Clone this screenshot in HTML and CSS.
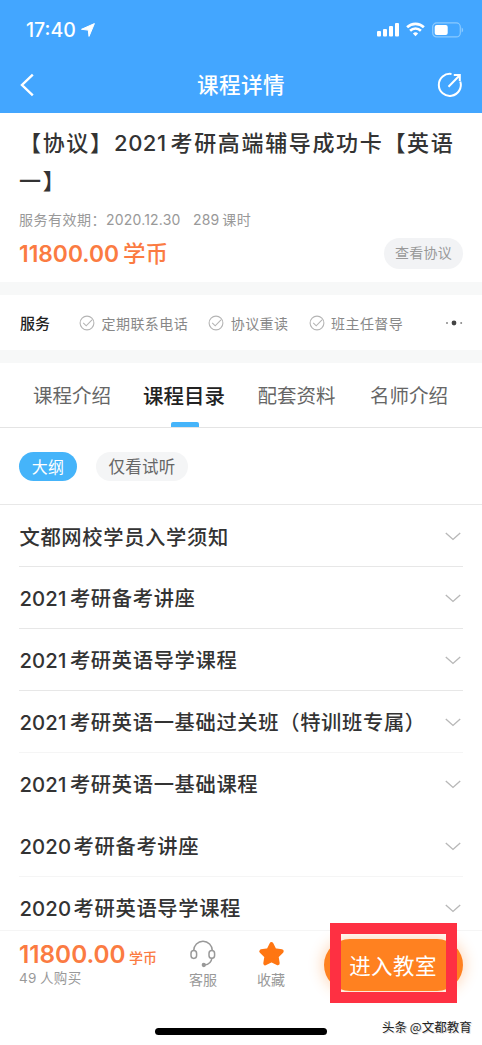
FILE: index.html
```html
<!DOCTYPE html>
<html lang="zh-CN">
<head>
<meta charset="utf-8">
<title>课程详情</title>
<link rel="stylesheet" href="styles.css">
</head>
<body>
<div class="screen">
  <header class="header">
    <div class="status">
      <div class="clock"><span>17:40</span>
        <svg width="14" height="14" viewBox="0 0 14 14"><path d="M13.4.6 8 13.4 7.3 7.1.5 6.3z" fill="#fff" stroke="#fff" stroke-width="1" stroke-linejoin="round"/></svg>
      </div>
      <div class="signals">
        <svg width="23" height="15" viewBox="0 0 23 15" fill="#fff"><rect x="0" y="9" width="4" height="5.5" rx="1"/><rect x="6" y="7" width="4" height="7.5" rx="1"/><rect x="12" y="4" width="4" height="10.5" rx="1"/><rect x="18" y="1" width="4" height="13.5" rx="1"/></svg>
        <svg class="wifi" width="19" height="15" viewBox="0 0 19 15" fill="none" stroke="#fff" stroke-width="2.6"><path d="M1.1 5.3a12 12 0 0 1 16.8 0M4.1 8.7a7.7 7.7 0 0 1 10.8 0"/><path d="m9.5 14.2-2.6-2.6a3.7 3.7 0 0 1 5.2 0z" fill="#fff" stroke="none"/></svg>
        <svg class="battery" width="32" height="16" viewBox="0 0 32 16"><rect x=".7" y=".9" width="27.6" height="14" rx="4" fill="none" stroke="#8bcaff" stroke-width="1.2"/><rect x="2.7" y="2.9" width="13" height="10" rx="2" fill="#fff"/><path d="M29.6 5.5v5q1.6-.8 1.6-2.5t-1.6-2.5" fill="#8bcaff"/></svg>
      </div>
    </div>
    <nav class="navbar">
      <svg class="back" width="14" height="24" viewBox="0 0 14 24" fill="none" stroke="#fff" stroke-width="2.4"><path d="M12.8 1.6 2 12l10.8 10.4"/></svg>
      <h1 class="nav-title">课程详情</h1>
      <svg class="share" width="26" height="26" viewBox="0 0 26 26" fill="none" stroke="#fff" stroke-width="2"><path d="M14.5 2A11 11 0 1 0 23.3 9.5M11.5 14.7 22.5 3.5M16.8 3h6v6"/></svg>
    </nav>
  </header>

  <section class="info">
    <h2 class="course"><span class="line">【协议】<span class="num">2021</span>考研高端辅导成功卡【英语</span><span class="line">一】</span></h2>
    <p class="meta"><span>服务有效期：</span><span class="num date">2020.12.30</span><span class="num hours">289</span><span>课时</span></p>
    <div class="price-row">
      <div class="price"><span class="num">11800.00</span><span class="price-unit">学币</span></div>
      <span class="agreement">查看协议</span>
    </div>
  </section>

  <section class="services">
    <strong class="services-label">服务</strong>
    <span class="service s1"><svg class="check" viewBox="0 0 16 16"><circle cx="8" cy="8" r="6.9"/><path d="m4.2 7.8 3 3 5.8-6"/></svg>定期联系电话</span>
    <span class="service s2"><svg class="check" viewBox="0 0 16 16"><circle cx="8" cy="8" r="6.9"/><path d="m4.2 7.8 3 3 5.8-6"/></svg>协议重读</span>
    <span class="service s3"><svg class="check" viewBox="0 0 16 16"><circle cx="8" cy="8" r="6.9"/><path d="m4.2 7.8 3 3 5.8-6"/></svg>班主任督导</span>
    <svg class="more" width="18" height="6" viewBox="0 0 18 6"><circle cx="2" cy="3" r="1" fill="#888"/><circle cx="9" cy="3" r="2.4" fill="#444"/><circle cx="16.2" cy="3" r="1" fill="#888"/></svg>
  </section>

  <nav class="tabs">
    <span class="tab">课程介绍</span>
    <span class="tab active">课程目录</span>
    <span class="tab t3">配套资料</span>
    <span class="tab t4">名师介绍</span>
  </nav>

  <div class="filters">
    <span class="pill on">大纲</span>
    <span class="pill">仅看试听</span>
  </div>

  <main class="list">
    <div class="row"><span>文都网校学员入学须知</span><svg class="chev" viewBox="0 0 16 9"><path d="m.8 1 7.2 6.4L15.2 1"/></svg></div>
    <div class="row"><span><span class="num">2021</span>考研备考讲座</span><svg class="chev" viewBox="0 0 16 9"><path d="m.8 1 7.2 6.4L15.2 1"/></svg></div>
    <div class="row"><span><span class="num">2021</span>考研英语导学课程</span><svg class="chev" viewBox="0 0 16 9"><path d="m.8 1 7.2 6.4L15.2 1"/></svg></div>
    <div class="row light"><span><span class="num">2021</span>考研英语一基础过关班（特训班专属）</span><svg class="chev" viewBox="0 0 16 9"><path d="m.8 1 7.2 6.4L15.2 1"/></svg></div>
    <div class="row plain"><span><span class="num">2021</span>考研英语一基础课程</span><svg class="chev" viewBox="0 0 16 9"><path d="m.8 1 7.2 6.4L15.2 1"/></svg></div>
    <div class="row light"><span><span class="num wide">2020</span>考研备考讲座</span><svg class="chev" viewBox="0 0 16 9"><path d="m.8 1 7.2 6.4L15.2 1"/></svg></div>
    <div class="row plain"><span><span class="num wide">2020</span>考研英语导学课程</span><svg class="chev" viewBox="0 0 16 9"><path d="m.8 1 7.2 6.4L15.2 1"/></svg></div>
  </main>

  <footer class="footer">
    <div class="bar">
      <div class="buy">
        <div class="total"><span class="num">11800.00</span><span class="unit">学币</span></div>
        <div class="count"><span class="num">49</span>人购买</div>
      </div>
      <div class="action support">
        <svg width="26" height="28" viewBox="0 0 26 28" fill="none" stroke="#999" stroke-width="1.5"><path d="M3.7 11V10.5a9.3 9.3 0 0 1 18.6 0v.5M22 17.5c-.5 4.5-3.5 7.2-7.6 7.6"/><rect x="1" y="10.6" width="5.6" height="7.8" rx="2.8"/><rect x="19" y="10.6" width="5.6" height="7.8" rx="2.8"/><circle cx="13.8" cy="25" r="1.4" fill="#999"/></svg>
        <span>客服</span>
      </div>
      <div class="action favorite">
        <svg width="28" height="28" viewBox="0 0 28 28"><path d="m14.5 4 3 6.2 7.2 1.1-5.1 5 1.1 7-6.2-3.1-6.2 3.1 1.1-7-5.1-5 7.2-1.1z" fill="#ff7612" stroke="#ff7612" stroke-width="4" stroke-linejoin="round"/></svg>
        <span>收藏</span>
      </div>
      <div class="enter-wrap">
        <span class="enter">进入教室</span>
        <div class="marker"></div>
      </div>
    </div>
    <div class="home"></div>
    <div class="credit">头条 @文都教育</div>
  </footer>
</div>
</body>
</html>
```
FILE: styles.css
```css
* { box-sizing: border-box; }
body { margin: 0; background: #fff; }
h1, h2, p { margin: 0; font-weight: inherit; }
svg { display: block; flex: none; }

.screen {
  width: 482px;
  height: 1045px;
  display: flex;
  flex-direction: column;
  overflow: hidden;
  background: #fff;
  color: #333;
  font-family: "Noto Sans CJK SC", sans-serif;
  white-space: nowrap;
}
.num { font-family: Inter, "Noto Sans CJK SC", sans-serif; }

.header { height: 113px; flex: none; background: #43a6ff; color: #fff; }
.status { height: 57px; padding: 2px 18px 0 26px; display: flex; justify-content: space-between; align-items: center; }
.clock { display: flex; align-items: center; gap: 5px; font: 500 19.5px/24px Inter, sans-serif; letter-spacing: 0; }
.signals { display: flex; align-items: center; }
.wifi { margin-left: 6px; }
.battery { margin-left: 7px; }
.navbar { height: 55px; padding: 0 19px 0 20px; display: grid; grid-template-columns: 26px 1fr 26px; align-items: center; }
.nav-title { text-align: center; font-size: 21.5px; line-height: 30px; font-weight: 500; letter-spacing: .5px; padding: 0 1px 1px 0; }

.info { height: 169px; flex: none; padding: 9px 19px 0; }
.course { height: 77px; font-size: 22px; font-weight: 500; letter-spacing: 1.65px; text-spacing-trim: space-all; }
.line { display: block; height: 38px; line-height: 38px; }
.course .num { letter-spacing: .5px; margin: 0 4px 0 .5px; line-height: 1; }
.meta { display: flex; align-items: center; height: 38px; padding-top: 2px; font-size: 14px; color: #999; letter-spacing: .5px; }
.date { letter-spacing: .2px; }
.hours { margin: 0 3px 0 12.5px; letter-spacing: .1px; }
.price-row { display: flex; justify-content: space-between; height: 33px; align-items: center; }
.price { display: flex; align-items: center; gap: 4px; font-size: 22.5px; line-height: 31px; font-weight: 500; color: #fb7b42; }
.price .num { font-weight: 600; font-size: 22.8px; padding-bottom: 1px; }
.price-unit { padding-bottom: 3px; }
.agreement { width: 79px; height: 31px; border-radius: 16px; background: #f2f3f5; color: #999; font-size: 14px; line-height: 29px; text-align: center; letter-spacing: .3px; }

.services { height: 81px; flex: none; border: solid #f7f8f8; border-width: 13px 0; padding: 0 19px 0 20px; display: flex; align-items: center; font-size: 14px; color: #888; }
.services-label { font-size: 15px; font-weight: 500; color: #222; width: 59px; }
.service { display: flex; align-items: center; gap: 6.5px; letter-spacing: .45px; line-height: 20px; }
.check { width: 16px; height: 16px; fill: none; stroke: #b5b5b5; stroke-width: 1.1; }
.s2 { margin-left: 20px; }
.s3 { margin-left: 20px; }
.more { margin-left: auto; }

.tabs { height: 65px; flex: none; padding: 0 33px; display: flex; border-bottom: 1px solid #e4e4e4; font-size: 19.5px; line-height: 64px; color: #666; }
.tab.active { margin-left: 32px; font-size: 20.5px; font-weight: 500; color: #222; position: relative; }
.tab.active::after { content: ""; position: absolute; left: 28px; bottom: 0; width: 28px; height: 5px; border-radius: 2px 2px 0 0; background: #45b4fa; }
.t3 { margin-left: 32.5px; }
.t4 { margin-left: 34.5px; }

.filters { height: 77px; flex: none; padding: 24px 19px 0; display: flex; gap: 19px; border-bottom: 1px solid #e8e8e8; }
.pill { width: 92px; height: 29px; border-radius: 15px; background: #f4f5f6; color: #666; font-size: 16.5px; line-height: 28px; text-align: center; letter-spacing: .3px; }
.pill.on { width: 58px; background: #45b4fa; color: #fff; font-size: 16px; }

.list { height: 425px; flex: none; overflow: hidden; padding: 0 19px; }
.row { height: 62px; display: flex; align-items: center; justify-content: space-between; border-bottom: 1px solid #e7e7e7; padding: 0 2px 0 .5px; font-size: 20.3px; line-height: 30px; font-weight: 500; letter-spacing: .65px; text-spacing-trim: space-all; }
.row .num { letter-spacing: .1px; margin-right: 3.5px; }
.row .wide { letter-spacing: .1px; margin-right: 2.5px; }
.light { border-color: #f5f5f5; }
.plain { border-color: transparent; }
.chev { width: 16px; height: 9px; margin-top: 1px; fill: none; stroke: #b8b8b8; stroke-width: 1.4; }

.footer { height: 115px; flex: none; position: relative; border-top: 1px solid #f5f5f5; background: #fff; }
.bar { display: flex; height: 80px; padding-left: 19px; }
.buy { width: 169px; flex: none; padding-top: 8px; }
.total { display: flex; align-items: baseline; gap: 3.5px; height: 28px; line-height: 30px; color: #fb7b42; }
.total .num { font-size: 24.3px; font-weight: 600; }
.unit { font-size: 14px; font-weight: 500; }
.count { font-size: 13.5px; line-height: 20px; color: #999; letter-spacing: .4px; }
.count .num { margin-right: 3px; }
.action { width: 30px; flex: none; padding-top: 9px; display: flex; flex-direction: column; align-items: center; gap: 1px; font-size: 14px; line-height: 21px; color: #999; }
.favorite { margin-left: 38px; }
.enter-wrap { position: relative; flex: none; margin: 8px 0 0 38px; width: 139px; height: 52px; }
.enter { display: block; height: 52px; border-radius: 26px; background: #ff8120; color: #fff; font-size: 21.5px; line-height: 52px; text-align: center; letter-spacing: .4px; padding-right: 1px; box-shadow: 0 0 14px 2px rgba(255, 129, 32, .3); }
.marker { position: absolute; left: 6px; top: -16px; width: 127px; height: 80px; border: 11px solid #fe3042; }
.home { position: absolute; left: 155px; top: 97px; width: 172px; height: 7px; border-radius: 4px; background: #000; }
.credit { position: absolute; left: 382px; top: 87px; font-size: 12.5px; line-height: 18px; color: #222; text-shadow: 1px 1px 0 #ddd; }
```
